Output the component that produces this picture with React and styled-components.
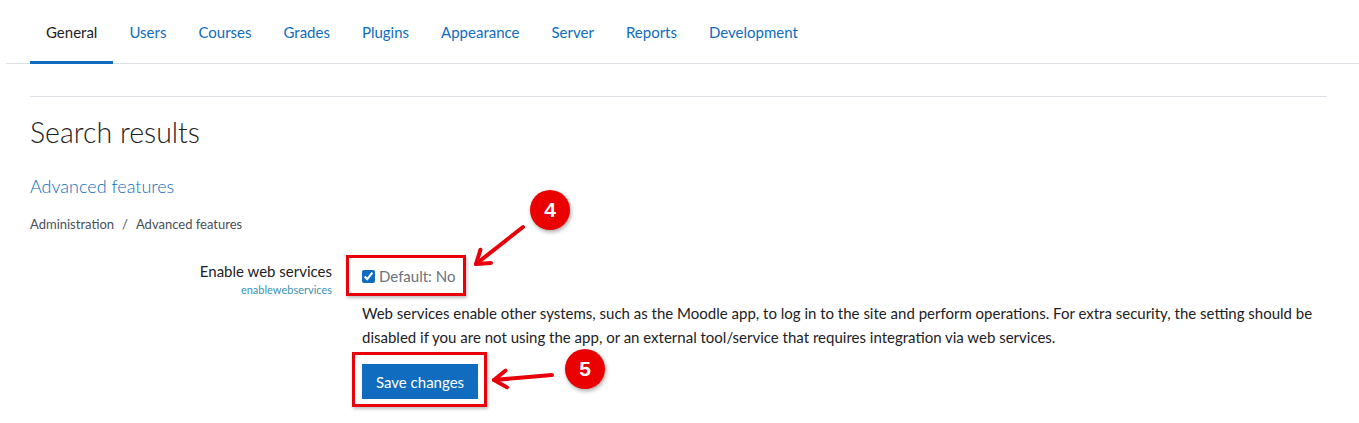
import React from "react";
import styled, { createGlobalStyle } from "styled-components";

const GlobalStyle = createGlobalStyle`
  body {
    margin: 0;
    background: #fff;
    font-family: Lato, "Noto Sans", sans-serif;
    color: #1d2125;
  }
`;

const tabs = [
  "General",
  "Users",
  "Courses",
  "Grades",
  "Plugins",
  "Appearance",
  "Server",
  "Reports",
  "Development",
];

const Page = styled.div`
  position: relative;
  width: 1359px;
  height: 423px;
  overflow: hidden;
`;

const Nav = styled.ul`
  display: flex;
  list-style: none;
  margin: 0 0 0 6px;
  padding: 0 0 0 24px;
  height: 63px;
  border-bottom: 1px solid #dee2e6;
`;

const Tab = styled.li`
  display: flex;
  align-items: center;
  padding: 2px 16px 0;
  height: 59px;
  font-size: 15px;
  color: ${(p) => (p.$active ? "#1d2125" : "#0f6cbf")};
  border-bottom: 3px solid ${(p) => (p.$active ? "#0f6cbf" : "transparent")};
  margin-bottom: -1px;
  cursor: pointer;
`;

const Content = styled.div`
  padding: 32px 32px 0 30px;
`;

const Rule = styled.hr`
  margin: 0;
  border: 0;
  border-top: 1px solid #dee2e6;
`;

const Heading = styled.h2`
  margin: 18px 0 0;
  font-size: 28.5px;
  font-weight: 300;
  line-height: 34px;
`;

const SectionLink = styled.a`
  display: block;
  margin-top: 25px;
  font-size: 18px;
  font-weight: 300;
  line-height: 24px;
  color: #0f6cbf;
  text-decoration: none;
`;

const Breadcrumb = styled.div`
  display: flex;
  gap: 8px;
  margin-top: 16px;
  font-size: 13px;
  line-height: 20px;
  color: #495057;
`;

const SettingRow = styled.div`
  display: grid;
  grid-template-columns: 302px 1fr;
  column-gap: 30px;
  margin-top: 26px;
`;

const LabelCol = styled.div`
  text-align: right;
`;

const Label = styled.div`
  font-size: 15px;
  line-height: 22px;
`;

const ShortName = styled.div`
  margin-top: 1px;
  font-size: 11px;
  line-height: 14px;
  color: #3a93b4;
`;

const ControlCol = styled.div`
  display: flex;
  flex-direction: column;
  align-items: flex-start;
`;

const Highlight = styled.div`
  position: relative;

  &::before {
    content: "";
    position: absolute;
    top: ${(p) => p.$t}px;
    left: ${(p) => p.$l}px;
    right: ${(p) => p.$r}px;
    bottom: ${(p) => p.$b}px;
    border: 3px solid #e8000b;
    box-shadow: 1px 2px 3px rgba(0, 0, 0, 0.25);
    pointer-events: none;
  }
`;

const CheckWrap = styled(Highlight)`
  margin-top: 5px;
`;

const CheckLine = styled.label`
  display: flex;
  align-items: center;
  gap: 4px;
  font-size: 15px;
  line-height: 22px;
  color: #6a737b;
`;

const Check = styled.input`
  margin: 0;
  width: 13px;
  height: 13px;
  accent-color: #0f6cbf;
`;

const Description = styled.p`
  margin: 14px 0 0;
  font-size: 15px;
  line-height: 24px;
  max-width: 965px;
`;

const SaveButton = styled.button`
  height: 35px;
  padding: 0 14px;
  border: 0;
  border-radius: 0;
  background: #0f6cbf;
  color: #fff;
  font-family: inherit;
  font-size: 15px;
`;

const ButtonWrap = styled(Highlight)`
  margin-top: 15px;
`;

const Badge = styled.div`
  position: absolute;
  left: ${(p) => p.$x - 20}px;
  top: ${(p) => p.$y - 20}px;
  width: 40px;
  height: 40px;
  border-radius: 50%;
  background: #ea0000;
  color: #fff;
  display: flex;
  align-items: center;
  justify-content: center;
  font-family: "Liberation Sans", Arial, sans-serif;
  font-weight: 700;
  font-size: 21px;
  box-shadow: 1px 2px 4px rgba(0, 0, 0, 0.35);
`;

const Overlay = styled.svg`
  position: absolute;
  left: 0;
  top: 0;
  pointer-events: none;
`;

const arrowHead = (x1, y1, x2, y2, len = 15, ang = 0.6) => {
  const a = Math.atan2(y1 - y2, x1 - x2);
  const p1 = [x2 + len * Math.cos(a + ang), y2 + len * Math.sin(a + ang)];
  const p2 = [x2 + len * Math.cos(a - ang), y2 + len * Math.sin(a - ang)];
  return `M${p1[0]},${p1[1]} L${x2},${y2} L${p2[0]},${p2[1]}`;
};

const arrows = [
  [523, 227, 476, 264],
  [552, 375, 494, 380],
];

const App = () => {
  return (
    <Page>
      <GlobalStyle />
      <Nav>
        {tabs.map((t, i) => (
          <Tab key={t} $active={i === 0}>
            {t}
          </Tab>
        ))}
      </Nav>
      <Content>
        <Rule />
        <Heading>Search results</Heading>
        <SectionLink href="#">Advanced features</SectionLink>
        <Breadcrumb>
          <span>Administration</span>
          <span>/</span>
          <span>Advanced features</span>
        </Breadcrumb>
        <SettingRow>
          <LabelCol>
            <Label>Enable web services</Label>
            <ShortName>enablewebservices</ShortName>
          </LabelCol>
          <ControlCol>
            <CheckWrap $t={-10} $l={-16} $r={-11} $b={-9}>
              <CheckLine>
                <Check type="checkbox" defaultChecked />
                Default: No
              </CheckLine>
            </CheckWrap>
            <Description>
              Web services enable other systems, such as the Moodle app, to log
              in to the site and perform operations. For extra security, the
              setting should be disabled if you are not using the app, or an
              external tool/service that requires integration via web services.
            </Description>
            <ButtonWrap $t={-12} $l={-10} $r={-9} $b={-8}>
              <SaveButton>Save changes</SaveButton>
            </ButtonWrap>
          </ControlCol>
        </SettingRow>
      </Content>
      <Overlay width="1359" height="423">
        {arrows.map(([x1, y1, x2, y2], i) => (
          <g
            key={i}
            stroke="#e8000b"
            strokeWidth="4"
            strokeLinecap="round"
            strokeLinejoin="round"
            fill="none"
          >
            <line x1={x1} y1={y1} x2={x2} y2={y2} />
            <path d={arrowHead(x1, y1, x2, y2)} />
          </g>
        ))}
      </Overlay>
      <Badge $x={550} $y={210}>4</Badge>
      <Badge $x={585} $y={369}>5</Badge>
    </Page>
  );
};

export default App;
